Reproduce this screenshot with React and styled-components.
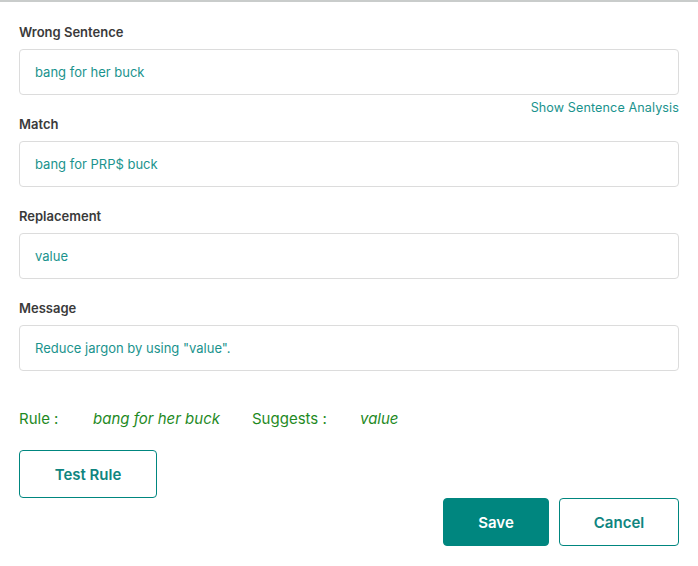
import React from "react";
import styled, { createGlobalStyle } from "styled-components";

const Global = createGlobalStyle`
  html, body { margin: 0; padding: 0; background: #fff; }
  body { font-family: Inter, "Open Sans", sans-serif; }
`;

const Page = styled.div`
  border-top: 2px solid #c9cccb;
  padding: 0 19px 20px 19px;
  width: 698px;
  box-sizing: border-box;
`;

const Field = styled.div`
  display: flex;
  flex-direction: column;
`;

const Label = styled.label`
  font-size: 13px;
  font-weight: 600;
  color: #3a3a3a;
  line-height: 16px;
  margin-top: ${(p) => p.$top}px;
  margin-bottom: 9px;
`;

const Input = styled.div`
  height: 46px;
  box-sizing: border-box;
  border: 1px solid #dcdcdc;
  border-radius: 4px;
  padding: 0 15px;
  display: flex;
  align-items: center;
  font-size: 13px;
  color: #1a938d;
`;

const Link = styled.a`
  align-self: flex-end;
  font-size: 12.6px;
  color: #1a938d;
  margin-top: 5px;
  line-height: 16px;
  letter-spacing: 0.1px;
`;

const RuleRow = styled.div`
  display: flex;
  align-items: center;
  margin-top: 38px;
  font-size: 15px;
  color: #1f8a1f;
  line-height: 20px;
`;

const RuleLabel = styled.span`
  width: ${(p) => p.$w}px;
`;

const RuleValue = styled.span`
  font-style: italic;
  width: ${(p) => p.$w}px;
`;

const Button = styled.button`
  height: 48px;
  box-sizing: border-box;
  border-radius: 4px;
  border: 1px solid #00867f;
  background: ${(p) => (p.$primary ? "#00867f" : "#fff")};
  color: ${(p) => (p.$primary ? "#fff" : "#0f8580")};
  font-family: Inter, "Open Sans", sans-serif;
  font-size: 15px;
  font-weight: 600;
  width: ${(p) => p.$w}px;
  cursor: pointer;
`;

const TestRow = styled.div`
  margin-top: 21px;
  display: flex;
`;

const Actions = styled.div`
  display: flex;
  justify-content: flex-end;
  gap: 10px;
  margin-top: 0;
`;

export default function App() {
  return (
    <Page>
      <Global />
      <Field>
        <Label $top={22}>Wrong Sentence</Label>
        <Input>bang for her buck</Input>
        <Link>Show Sentence Analysis</Link>
      </Field>
      <Field>
        <Label $top={0}>Match</Label>
        <Input>bang for PRP$ buck</Input>
      </Field>
      <Field>
        <Label $top={21}>Replacement</Label>
        <Input>value</Input>
      </Field>
      <Field>
        <Label $top={21}>Message</Label>
        <Input>Reduce jargon by using "value".</Input>
      </Field>
      <RuleRow>
        <RuleLabel $w={74}>Rule :</RuleLabel>
        <RuleValue $w={159}>bang for her buck</RuleValue>
        <RuleLabel $w={108}>Suggests :</RuleLabel>
        <RuleValue>value</RuleValue>
      </RuleRow>
      <TestRow>
        <Button $w={138}>Test Rule</Button>
      </TestRow>
      <Actions>
        <Button $primary $w={106}>Save</Button>
        <Button $w={120}>Cancel</Button>
      </Actions>
    </Page>
  );
}
